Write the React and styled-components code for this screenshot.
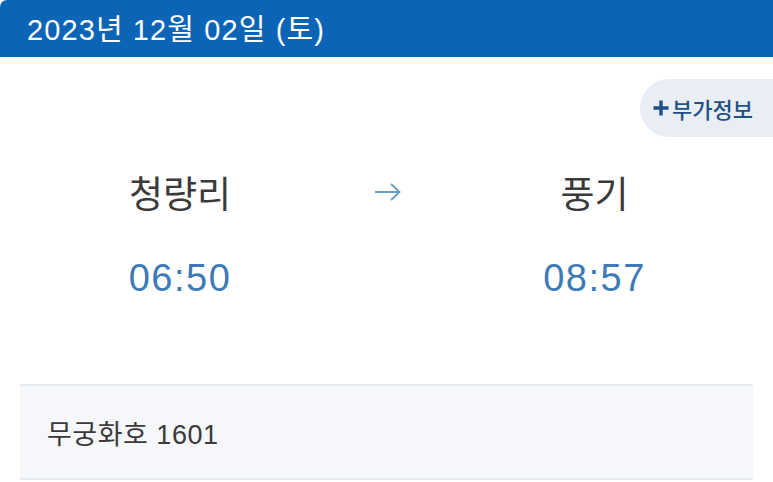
import React from "react";
import styled, { createGlobalStyle } from "styled-components";

const GlobalStyle = createGlobalStyle`
  html, body {
    margin: 0;
    padding: 0;
    background: #ffffff;
    font-family: "Noto Sans CJK KR", "Noto Sans", sans-serif;
  }
`;

const Page = styled.div`
  width: 773px;
  height: 482px;
  overflow: hidden;
  background: #fff;
`;

const DateBar = styled.div`
  height: 57px;
  box-sizing: border-box;
  padding: 0 0 3px 27px;
  background: #0b64b5;
  border-top-left-radius: 7px;
  color: #fff;
  font-family: "Liberation Sans", "Noto Sans CJK KR", sans-serif;
  font-size: 29px;
  display: flex;
  align-items: center;
  letter-spacing: 1.1px;
`;

const ExtraRow = styled.div`
  display: flex;
  justify-content: flex-end;
  padding-top: 22px;
`;

const ExtraButton = styled.div`
  height: 58px;
  width: 133px;
  background: #e9eef5;
  border-radius: 29px 0 0 29px;
  display: flex;
  align-items: center;
  padding-left: 12px;
  box-sizing: border-box;
  color: #1f5289;
  font-size: 22px;
  font-weight: 500;
  gap: 2px;
`;

const Route = styled.div`
  display: grid;
  grid-template-columns: 360px 56px 357px;
  margin-top: 31px;
`;

const Column = styled.div`
  display: flex;
  flex-direction: column;
  align-items: center;
`;

const Station = styled.div`
  font-size: 37px;
  color: #3a3a3a;
  line-height: 48px;
  height: 48px;
`;

const Time = styled.div`
  font-family: "Liberation Sans", sans-serif;
  font-size: 38px;
  line-height: 44px;
  color: #3d7bb8;
  margin-top: 40px;
  letter-spacing: 1.5px;
`;

const ArrowCell = styled.div`
  display: flex;
  justify-content: center;
  padding-top: 13px;
`;

const TrainPanel = styled.div`
  margin: 84px 20px 0 20px;
  height: 92px;
  background: #f5f7fa;
  border-top: 2px solid #e6e9ed;
  border-bottom: 2px solid #e6e9ed;
  display: flex;
  align-items: center;
  padding-left: 27px;
  font-family: "Liberation Sans", "Noto Sans CJK KR", sans-serif;
  font-size: 27px;
  color: #3a3a3a;
  letter-spacing: 0.5px;
`;

export default function App() {
  return (
    <Page>
      <GlobalStyle />
      <DateBar>2023년 12월 02일 (토)</DateBar>
      <ExtraRow>
        <ExtraButton>
          <svg width="18" height="18" viewBox="0 0 18 18">
            <path d="M9 1.5v15M1.5 9h15" stroke="#1b4f86" strokeWidth="3.4" />
          </svg>
          부가정보
        </ExtraButton>
      </ExtraRow>
      <Route>
        <Column>
          <Station>청량리</Station>
          <Time>06:50</Time>
        </Column>
        <ArrowCell>
          <svg width="30" height="22" viewBox="0 0 30 22">
            <path d="M2 11h25M18 3l8.5 8L18 19" fill="none" stroke="#6a9cc8" strokeWidth="1.8" />
          </svg>
        </ArrowCell>
        <Column>
          <Station>풍기</Station>
          <Time>08:57</Time>
        </Column>
      </Route>
      <TrainPanel>무궁화호 1601</TrainPanel>
    </Page>
  );
}
